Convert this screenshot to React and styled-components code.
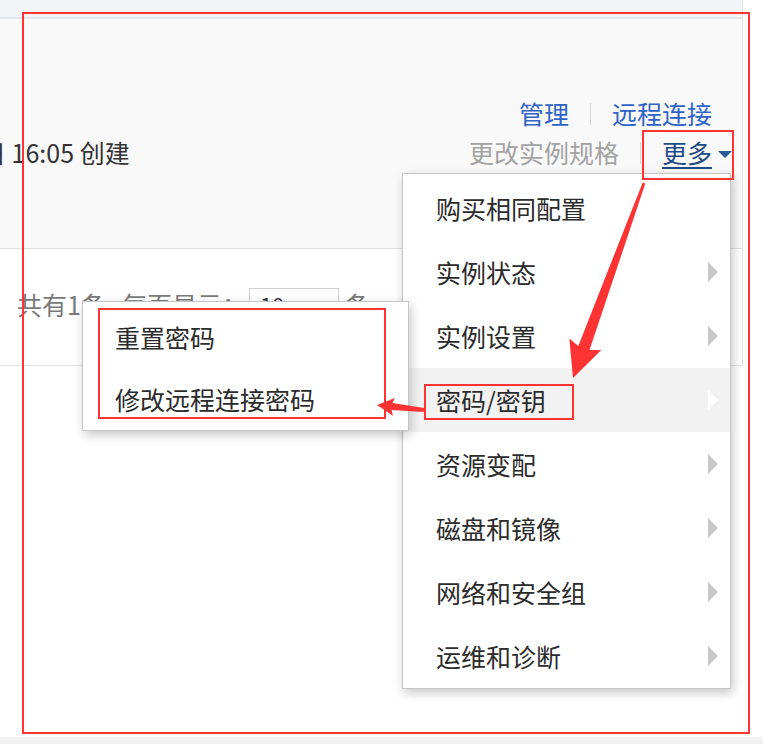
import React from "react";
import styled, { createGlobalStyle } from "styled-components";

const GlobalStyle = createGlobalStyle`
  html, body { margin: 0; padding: 0; background: #fff; }
  body { font-family: "Noto Sans CJK SC", "Noto Sans", sans-serif; }
`;

const Page = styled.div`
  position: relative;
  width: 763px;
  height: 744px;
  overflow: hidden;
  display: flex;
  flex-direction: column;
  background: #fff;
  font-family: "Noto Sans CJK SC", "Noto Sans", sans-serif;
  font-size: 25px;
  color: #333;
`;

const Main = styled.div`
  width: 743px;
  box-sizing: border-box;
  border-right: 1px solid #e1e3e6;
`;

const TopStrip = styled.div`
  height: 17px;
  background: #f3f4f6;
`;

const Header = styled.div`
  height: 229px;
  box-sizing: content-box;
  border-top: 2px solid #e4e8ed;
  border-bottom: 1px solid #e0e0e0;
  background: #f9f9fa;
  display: flex;
  justify-content: space-between;
  align-items: flex-start;
  padding-top: 0;
`;

const Created = styled.div`
  margin-top: 114px;
  margin-left: -19px;
  line-height: 39px;
  white-space: nowrap;
  color: #333;
`;

const Actions = styled.div`
  margin-top: 75px;
  padding-right: 30px;
  display: flex;
  flex-direction: column;
  align-items: flex-end;
`;

const ActionRow = styled.div`
  display: flex;
  align-items: center;
  height: 39px;
  white-space: nowrap;
`;

const ActionLink = styled.span`
  color: ${(p) => p.$tone === "muted" ? "#a3a3a3" : p.$tone === "dark" ? "#1f4a86" : "#2f63c7"};
  text-decoration: ${(p) => (p.$underline ? "underline" : "none")};
  text-underline-offset: 4px;
  text-decoration-thickness: 1.5px;
  line-height: 39px;
`;

const Sep = styled.span`
  display: inline-block;
  width: 1px;
  height: 22px;
  margin: 0 21px;
  background: #d8d8d8;
`;

const Caret = styled.span`
  display: inline-block;
  width: 0;
  height: 0;
  margin-left: 6px;
  margin-right: -20px;
  margin-top: 3px;
  border-left: 7px solid transparent;
  border-right: 7px solid transparent;
  border-top: 7px solid #2b5a98;
`;

const Footer = styled.div`
  height: 116px;
  border-bottom: 1px solid #e3e3e3;
  background: #fff;
  padding: 39px 0 0 17px;
  box-sizing: content-box;
  height: 77px;
`;

const Pager = styled.div`
  display: flex;
  align-items: center;
  height: 32px;
  color: #7a7a7a;
  white-space: nowrap;
`;

const Comma = styled.span`
  display: inline-block;
  width: 16px;
  overflow: hidden;
`;

const PageSize = styled.div`
  width: 90px;
  height: 32px;
  box-sizing: border-box;
  margin: 0 6px 0 2px;
  border: 1px solid #cfcfcf;
  background: #fff;
  color: #333;
  padding-left: 10px;
  line-height: 30px;
  font-size: 22px;
`;

const Filler = styled.div`
  flex: 1;
`;

const BottomStrip = styled.div`
  height: 7px;
  background: #f3f3f3;
`;

const Menu = styled.div`
  position: absolute;
  left: ${(p) => p.$x}px;
  top: ${(p) => p.$y}px;
  width: ${(p) => p.$w}px;
  box-sizing: border-box;
  padding-top: ${(p) => p.$pad}px;
  padding-bottom: 0;
  background: #fff;
  border: 1px solid #c6c6c6;
  box-shadow: 2px 4px 10px rgba(0, 0, 0, 0.22);
  z-index: ${(p) => p.$z};
`;

const MenuItem = styled.div`
  display: flex;
  align-items: center;
  justify-content: space-between;
  height: ${(p) => p.$h}px;
  padding: 0 12px 0 ${(p) => p.$indent}px;
  background: ${(p) => (p.$active ? "#f2f2f2" : "#fff")};
  color: #2b2b2b;
  white-space: nowrap;
`;

const SubArrow = styled.span`
  display: inline-block;
  width: 0;
  height: 0;
  border-top: 10px solid transparent;
  border-bottom: 10px solid transparent;
  border-left: 10px solid ${(p) => (p.$active ? "#ffffff" : "#c8c8c8")};
`;

const Annotations = styled.svg`
  position: absolute;
  left: 0;
  top: 0;
  width: 763px;
  height: 744px;
  pointer-events: none;
  z-index: 10;
`;

const menuItems = [
  { label: "购买相同配置", sub: false },
  { label: "实例状态", sub: true },
  { label: "实例设置", sub: true },
  { label: "密码/密钥", sub: true, active: true },
  { label: "资源变配", sub: true },
  { label: "磁盘和镜像", sub: true },
  { label: "网络和安全组", sub: true },
  { label: "运维和诊断", sub: true },
];

const subItems = ["重置密码", "修改远程连接密码"];

const RED = "#ff3333";

export default function App() {
  return (
    <>
      <GlobalStyle />
      <Page>
        <Main>
          <TopStrip />
          <Header>
            <Created>日 16:05 创建</Created>
            <Actions>
              <ActionRow>
                <ActionLink>管理</ActionLink>
                <Sep />
                <ActionLink>远程连接</ActionLink>
              </ActionRow>
              <ActionRow>
                <ActionLink $tone="muted">更改实例规格</ActionLink>
                <Sep />
                <ActionLink $tone="dark" $underline>更多</ActionLink>
                <Caret />
              </ActionRow>
            </Actions>
          </Header>
          <Footer>
            <Pager>
              <span>共有1条</span>
              <Comma>，</Comma>
              <span>每页显示：</span>
              <PageSize>10</PageSize>
              <span>条</span>
            </Pager>
          </Footer>
        </Main>
        <Filler />
        <BottomStrip />

        <Menu $x={402} $y={173} $w={329} $pad={2} $z={2}>
          {menuItems.map((it) => (
            <MenuItem key={it.label} $h={64} $indent={33} $active={it.active}>
              <span>{it.label}</span>
              {it.sub && <SubArrow $active={it.active} />}
            </MenuItem>
          ))}
        </Menu>

        <Menu $x={82} $y={301} $w={327} $pad={4} $z={3}>
          {subItems.map((s) => (
            <MenuItem key={s} $h={62} $indent={32}>
              <span>{s}</span>
            </MenuItem>
          ))}
        </Menu>

        <Annotations viewBox="0 0 763 744">
          <g fill="none" stroke={RED} strokeWidth="2">
            <rect x="23" y="13" width="726" height="720" />
            <rect x="643" y="131" width="90" height="48" />
            <rect x="99" y="309" width="286" height="109" />
            <rect x="425" y="385" width="148" height="34" />
          </g>
          <g fill={RED}>
            <polygon points="645.3,183.6 589.5,350.1 601.3,350 573,378 569.3,338.4 578.3,346 642.7,182.4" />
            <polygon points="424.2,408 392.4,403.1 394.9,397.9 377,405 392.9,415.7 391.6,410.1 423.8,412" />
          </g>
        </Annotations>
      </Page>
    </>
  );
}
